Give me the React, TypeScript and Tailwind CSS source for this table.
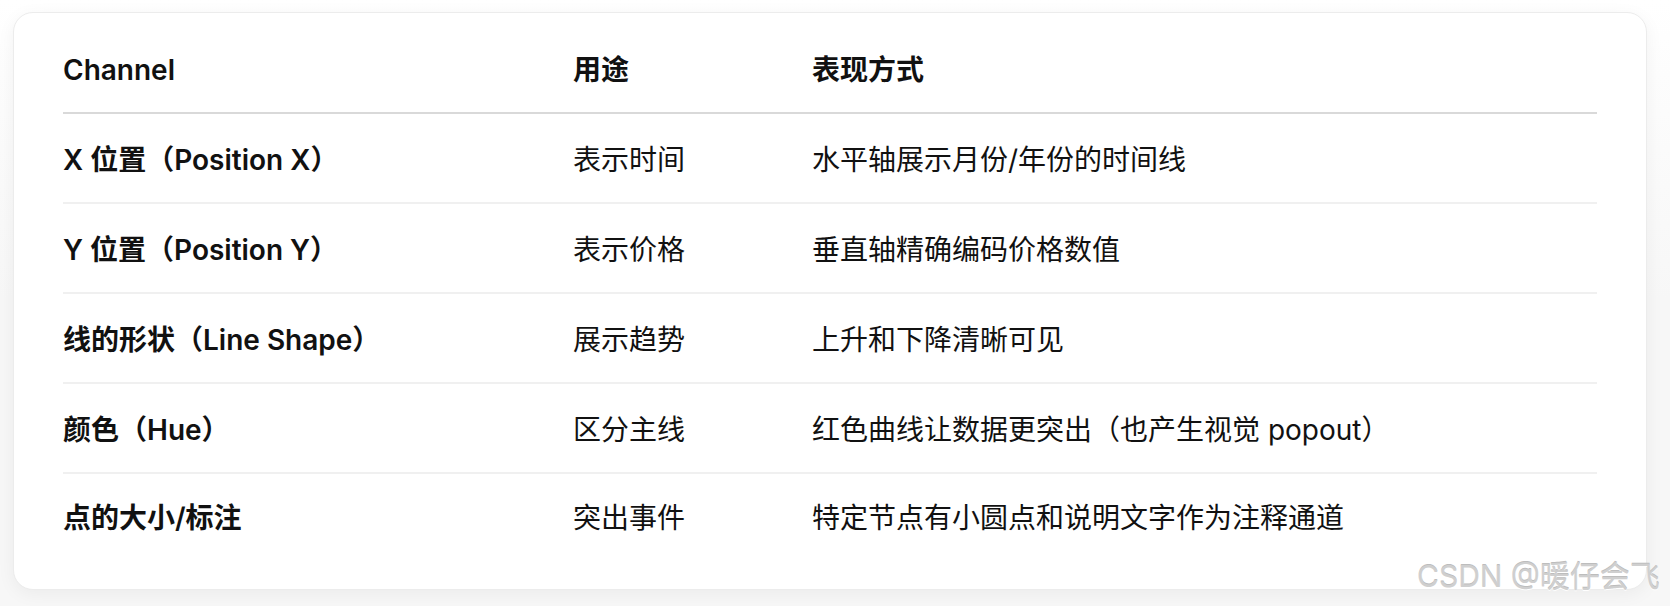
import React from "react";

const rows: [string, string, string][] = [
  ["X 位置（Position X）", "表示时间", "水平轴展示月份/年份的时间线"],
  ["Y 位置（Position Y）", "表示价格", "垂直轴精确编码价格数值"],
  ["线的形状（Line Shape）", "展示趋势", "上升和下降清晰可见"],
  ["颜色（Hue）", "区分主线", "红色曲线让数据更突出（也产生视觉 popout）"],
  ["点的大小/标注", "突出事件", "特定节点有小圆点和说明文字作为注释通道"],
];

export default function App() {
  return (
    <div
      className="relative w-[1670px] h-[606px] bg-[#f7f7f7] overflow-hidden text-[#111111]"
      style={{ fontFamily: '"Inter", "Noto Sans CJK SC", sans-serif' }}
    >
      <div className="absolute inset-x-0 top-0 h-[300px] bg-gradient-to-b from-white to-[#f7f7f7]" />
      <div className="relative ml-[13px] mt-[12px] w-[1634px] h-[578px] bg-white border border-[#ececec] rounded-[20px] shadow-[0_4px_18px_rgba(0,0,0,0.05)] pt-[15px] px-[49px]">
        <div className="grid grid-cols-[510px_239px_1fr] h-[84px] items-center border-b-2 border-[#d9d9d9] box-content text-[28px] font-semibold">
          <div>Channel</div>
          <div>用途</div>
          <div>表现方式</div>
        </div>
        {rows.map((r, i) => (
          <div
            key={i}
            className={
              i < rows.length - 1
                ? "grid grid-cols-[510px_239px_1fr] h-[84px] pt-[4px] items-center border-b-2 border-[#f0f0f0] box-content text-[28px]"
                : "grid grid-cols-[510px_239px_1fr] h-[84px] pt-[4px] items-center text-[28px]"
            }
          >
            <div className="font-semibold">{r[0]}</div>
            <div>{r[1]}</div>
            <div>{r[2]}</div>
          </div>
        ))}
      </div>
      <div
        className="absolute left-[1417px] top-[561px] text-[30px] leading-none text-[#cfcfcf] whitespace-nowrap"
        style={{ textShadow: "0 1px 0 #ffffff, 0 -1px 0 #bdbdbd" }}
      >
        CSDN @暖仔会飞
      </div>
    </div>
  );
}
